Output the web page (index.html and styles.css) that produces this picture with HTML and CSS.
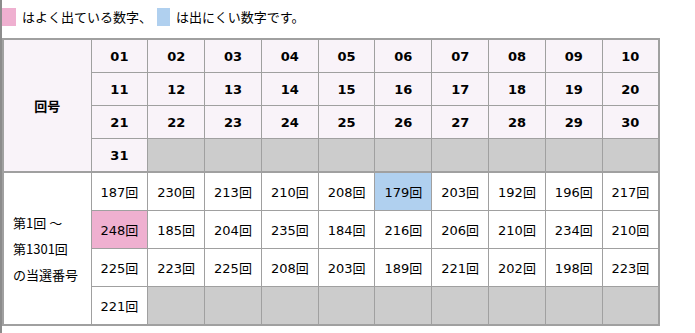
FILE: index.html
```html
<!DOCTYPE html>
<html lang="ja">
<head>
<meta charset="utf-8">
<link rel="stylesheet" href="styles.css">
</head>
<body>
<div class="legend">
  <span class="swatch hot"></span><span class="legend-text">はよく出ている数字、</span>
  <span class="swatch cold"></span><span class="legend-text">は出にくい数字です。</span>
</div>
<table class="stats">
  <colgroup>
    <col class="col-head">
    <col><col><col><col><col><col><col><col><col><col>
  </colgroup>
  <thead>
    <tr>
      <th class="side" rowspan="4">回号</th>
      <th>01</th><th>02</th><th>03</th><th>04</th><th>05</th><th>06</th><th>07</th><th>08</th><th>09</th><th>10</th>
    </tr>
    <tr>
      <th>11</th><th>12</th><th>13</th><th>14</th><th>15</th><th>16</th><th>17</th><th>18</th><th>19</th><th>20</th>
    </tr>
    <tr>
      <th>21</th><th>22</th><th>23</th><th>24</th><th>25</th><th>26</th><th>27</th><th>28</th><th>29</th><th>30</th>
    </tr>
    <tr>
      <th>31</th><th class="empty"></th><th class="empty"></th><th class="empty"></th><th class="empty"></th><th class="empty"></th><th class="empty"></th><th class="empty"></th><th class="empty"></th><th class="empty"></th>
    </tr>
  </thead>
  <tbody>
    <tr>
      <td class="side" rowspan="4">第1回 ～<br>第1301回<br>の当選番号</td>
      <td>187回</td><td>230回</td><td>213回</td><td>210回</td><td>208回</td><td class="cold">179回</td><td>203回</td><td>192回</td><td>196回</td><td>217回</td>
    </tr>
    <tr>
      <td class="hot">248回</td><td>185回</td><td>204回</td><td>235回</td><td>184回</td><td>216回</td><td>206回</td><td>210回</td><td>234回</td><td>210回</td>
    </tr>
    <tr>
      <td>225回</td><td>223回</td><td>225回</td><td>208回</td><td>203回</td><td>189回</td><td>221回</td><td>202回</td><td>198回</td><td>223回</td>
    </tr>
    <tr>
      <td>221回</td><td class="empty"></td><td class="empty"></td><td class="empty"></td><td class="empty"></td><td class="empty"></td><td class="empty"></td><td class="empty"></td><td class="empty"></td><td class="empty"></td>
    </tr>
  </tbody>
</table>
</body>
</html>
```
FILE: styles.css
```css
html, body {
  margin: 0;
  padding: 0;
}
body {
  min-height: 100vh;
  box-sizing: border-box;
  border-left: 2px solid #8c8c8c;
  background: #fff;
  color: #000;
  font-family: "DejaVu Sans", "Noto Sans CJK JP", sans-serif;
  font-size: 13px;
}
.legend {
  display: flex;
  align-items: center;
  height: 17px;
  padding-top: 8px;
  font-family: "Noto Sans CJK JP", sans-serif;
  font-size: 13px;
  line-height: 17px;
}
.swatch {
  display: inline-block;
  width: 14px;
  height: 18px;
}
.swatch.hot { background: #efb0d0; }
.swatch.cold { background: #b0d0ef; margin-left: 5px; width: 13px; }
.legend-text { margin-left: 6px; }
.stats {
  margin-top: 13px;
  border-collapse: collapse;
  table-layout: fixed;
  width: 658px;
  border: 2px solid #a0a0a0;
}
.col-head { width: 88px; }
.stats th, .stats td {
  border: 1px solid #a0a0a0;
  text-align: center;
  padding: 0;
}
.stats thead th {
  height: 32px;
  background: #f9f3f9;
  font-weight: bold;
}
.stats tbody {
  border-top: 2px solid #a0a0a0;
}
.stats tbody td {
  height: 37px;
  background: #fff;
  font-weight: normal;
}
.stats .side {
  background: #f9f3f9;
}
.stats thead .side {
  font-family: "Noto Sans CJK JP", sans-serif;
}
.stats tbody .side {
  background: #fff;
  text-align: left;
  padding-left: 9px;
  line-height: 26px;
  font-family: "Noto Sans CJK JP", sans-serif;
}
.stats .empty,
.stats thead .empty,
.stats tbody .empty {
  background: #cccccc;
}
.stats tbody .hot { background: #efb0d0; }
.stats tbody .cold { background: #b0d0ef; }
```
